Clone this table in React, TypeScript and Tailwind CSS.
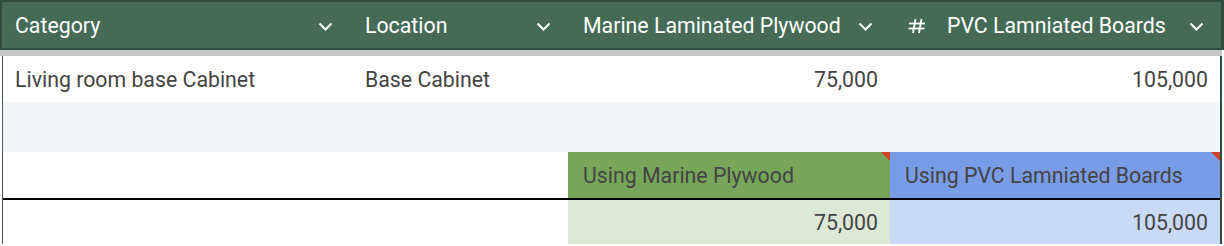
import React from "react";

const cols = "grid grid-cols-[348px_218px_322px_331px]";
const bodyCols = "grid grid-cols-[347px_218px_322px_330px]";

const Chevron = () => (
  <svg width="15" height="9" viewBox="0 0 15 9" className="shrink-0">
    <polyline
      points="1.5,1.5 7.5,7.5 13.5,1.5"
      fill="none"
      stroke="white"
      strokeWidth="2"
    />
  </svg>
);

const Hash = () => (
  <svg width="18" height="16" viewBox="0 0 18 16" className="shrink-0">
    <g stroke="white" strokeWidth="1.8" fill="none">
      <line x1="7.5" y1="1" x2="5" y2="15" />
      <line x1="13.5" y1="1" x2="11" y2="15" />
      <line x1="1" y1="5.5" x2="17" y2="5.5" />
      <line x1="0.5" y1="10.5" x2="16.5" y2="10.5" />
    </g>
  </svg>
);

const HeaderCell = ({
  label,
  pad,
  hash,
}: {
  label: string;
  pad: string;
  hash?: boolean;
}) => (
  <div className={`flex items-center justify-between pr-[17px] pt-[2px] ${pad}`}>
    <div className="flex items-center gap-[21px]">
      {hash && <Hash />}
      <span>{label}</span>
    </div>
    <Chevron />
  </div>
);

const Flag = () => (
  <div className="absolute top-0 right-0 w-0 h-0 border-t-[9px] border-l-[9px] border-t-[#d1402a] border-l-transparent" />
);

export default function App() {
  return (
    <div className="w-[1224px] h-[246px] overflow-hidden bg-white font-['Roboto',sans-serif] text-[21.3px]">
      <div
        className={`${cols} h-[50px] bg-[#456b57] border-t-2 border-b-2 border-l-2 border-r-[3px] border-[#2f4b3d] text-white`}
      >
        <HeaderCell label="Category" pad="pl-[13px]" />
        <HeaderCell label="Location" pad="pl-[15px]" />
        <HeaderCell label="Marine Laminated Plywood" pad="pl-[15px]" />
        <HeaderCell label="PVC Lamniated Boards" pad="pl-[18px]" hash />
      </div>
      <div className="h-[6px] w-[1222px] bg-[#c8c8c8]" />
      <div className="ml-[2px] w-[1220px] border-l border-r-2 border-l-[#4a5a50] border-r-[#2f4b3d] text-[#444]">
        <div className={`${bodyCols} h-[46px] items-center pt-[2px]`}>
          <div className="pl-[12px]">Living room base Cabinet</div>
          <div className="pl-[15px]">Base Cabinet</div>
          <div className="pr-[12px] text-right">75,000</div>
          <div className="pr-[12px] text-right">105,000</div>
        </div>
        <div className="h-[50px] bg-[#f3f6f9]" />
        <div className={`${bodyCols} h-[46px]`}>
          <div className="col-span-2" />
          <div className="relative flex items-center pl-[15px] pt-[2px] bg-[#77a65a]">
            Using Marine Plywood
            <Flag />
          </div>
          <div className="relative flex items-center pl-[15px] pt-[2px] bg-[#789de6]">
            Using PVC Lamniated Boards
            <Flag />
          </div>
        </div>
        <div className={`${bodyCols} h-[46px] border-t-2 border-black`}>
          <div className="col-span-2" />
          <div className="flex items-center justify-end pr-[12px] pt-[2px] bg-[#dde9d5]">
            75,000
          </div>
          <div className="flex items-center justify-end pr-[12px] pt-[2px] bg-[#c9daf7]">
            105,000
          </div>
        </div>
      </div>
    </div>
  );
}
